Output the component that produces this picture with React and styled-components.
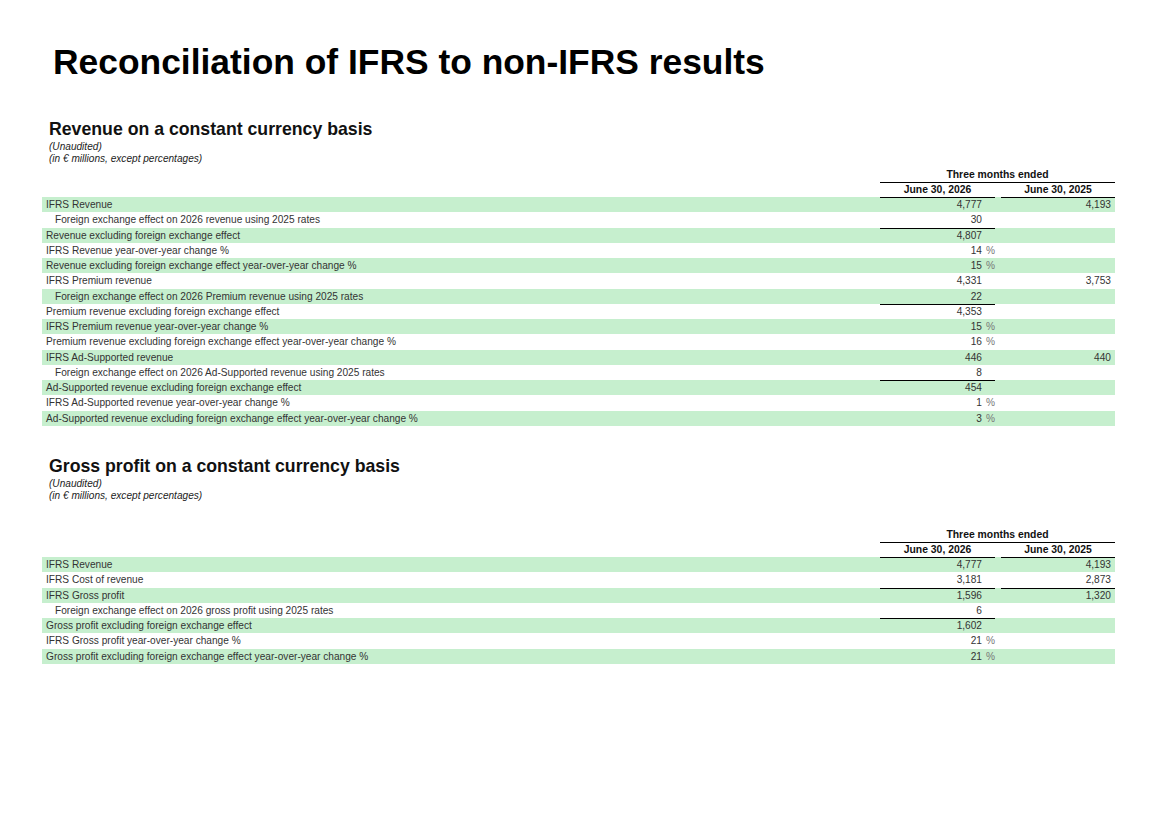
import React from 'react';
import styled, { createGlobalStyle } from 'styled-components';

const GlobalStyle = createGlobalStyle`
  body {
    margin: 0;
    background: #fff;
    font-family: "Liberation Sans", Arial, sans-serif;
  }
`;

const revenueRows = [
  { label: 'IFRS Revenue', a: '4,777', b: '4,193', green: true },
  { label: 'Foreign exchange effect on 2026 revenue using 2025 rates', a: '30', indent: true },
  { label: 'Revenue excluding foreign exchange effect', a: '4,807', green: true, ruleA: true },
  { label: 'IFRS Revenue year-over-year change %', a: '14', pct: true },
  { label: 'Revenue excluding foreign exchange effect year-over-year change %', a: '15', pct: true, green: true },
  { label: 'IFRS Premium revenue', a: '4,331', b: '3,753' },
  { label: 'Foreign exchange effect on 2026 Premium revenue using 2025 rates', a: '22', indent: true, green: true },
  { label: 'Premium revenue excluding foreign exchange effect', a: '4,353', ruleA: true },
  { label: 'IFRS Premium revenue year-over-year change %', a: '15', pct: true, green: true },
  { label: 'Premium revenue excluding foreign exchange effect year-over-year change %', a: '16', pct: true },
  { label: 'IFRS Ad-Supported revenue', a: '446', b: '440', green: true },
  { label: 'Foreign exchange effect on 2026 Ad-Supported revenue using 2025 rates', a: '8', indent: true },
  { label: 'Ad-Supported revenue excluding foreign exchange effect', a: '454', green: true, ruleA: true },
  { label: 'IFRS Ad-Supported revenue year-over-year change %', a: '1', pct: true },
  { label: 'Ad-Supported revenue excluding foreign exchange effect year-over-year change %', a: '3', pct: true, green: true },
];

const grossRows = [
  { label: 'IFRS Revenue', a: '4,777', b: '4,193', green: true },
  { label: 'IFRS Cost of revenue', a: '3,181', b: '2,873' },
  { label: 'IFRS Gross profit', a: '1,596', b: '1,320', green: true, ruleA: true, ruleB: true },
  { label: 'Foreign exchange effect on 2026 gross profit using 2025 rates', a: '6', indent: true },
  { label: 'Gross profit excluding foreign exchange effect', a: '1,602', green: true, ruleA: true },
  { label: 'IFRS Gross profit year-over-year change %', a: '21', pct: true },
  { label: 'Gross profit excluding foreign exchange effect year-over-year change %', a: '21', pct: true, green: true },
];

const Table = ({ rows, spaced }) => (
  <TableWrap $spaced={spaced}>
    <HeadRow>
      <span />
      <HeadSpan>Three months ended</HeadSpan>
    </HeadRow>
    <HeadRow>
      <span />
      <HeadCell>June 30, 2026</HeadCell>
      <span />
      <HeadCell>June 30, 2025</HeadCell>
    </HeadRow>
    {rows.map(row => (
      <Row key={row.label} $green={row.green}>
        <Label $indent={row.indent}>{row.label}</Label>
        <Value $rule={row.ruleA} $pad={0}>
          {row.a}
          <Suffix>{row.pct ? '%' : ''}</Suffix>
        </Value>
        <span />
        <Value $rule={row.ruleB} $pad={4}>
          {row.b}
        </Value>
      </Row>
    ))}
  </TableWrap>
);

const App = () => (
  <Page>
    <GlobalStyle />
    <Title>Reconciliation of IFRS to non-IFRS results</Title>

    <Section $top={36}>
      <Heading>Revenue on a constant currency basis</Heading>
      <Note>(Unaudited)</Note>
      <Note>(in € millions, except percentages)</Note>
      <Table rows={revenueRows} />
    </Section>

    <Section $top={29}>
      <Heading>Gross profit on a constant currency basis</Heading>
      <Note>(Unaudited)</Note>
      <Note>(in € millions, except percentages)</Note>
      <Table rows={grossRows} spaced />
    </Section>
  </Page>
);

const Page = styled.div`
  width: 1159px;
  min-height: 818px;
  box-sizing: border-box;
  padding: 42px 44px 0 42px;
  color: #000;
`;

const Title = styled.h1`
  margin: 0 0 0 11px;
  font-size: 35.4px;
  line-height: 40px;
  font-weight: 700;
  color: #000;
`;

const Section = styled.section`
  margin-top: ${({ $top }) => $top}px;
`;

const Heading = styled.h2`
  margin: 0 0 1px 7px;
  font-size: 17.7px;
  line-height: 22px;
  font-weight: 700;
  color: #111;
`;

const Note = styled.div`
  margin-left: 7px;
  font-size: 10.1px;
  line-height: 12px;
  font-style: italic;
  color: #222;
`;

const TableWrap = styled.div`
  margin-top: ${({ $spaced }) => ($spaced ? 25 : 2)}px;
  font-size: 10.15px;
`;

const cols = '1fr 115px 6px 114px';

const HeadRow = styled.div`
  display: grid;
  grid-template-columns: ${cols};
  height: 15px;
  box-sizing: border-box;
`;

const HeadSpan = styled.div`
  grid-column: 2 / 5;
  text-align: center;
  font-size: 10.4px;
  font-weight: 700;
  color: #111;
  line-height: 15px;
  border-bottom: 1px solid #000;
`;

const HeadCell = styled.div`
  text-align: center;
  font-size: 10.4px;
  font-weight: 700;
  color: #111;
  line-height: 15px;
  border-bottom: 1px solid #000;
`;

const Row = styled.div`
  display: grid;
  grid-template-columns: ${cols};
  height: 15.27px;
  background: ${({ $green }) => ($green ? '#c6efce' : 'transparent')};
  color: #333;
  line-height: 15px;
`;

const Label = styled.div`
  padding-left: ${({ $indent }) => ($indent ? 13 : 4)}px;
  white-space: nowrap;
`;

const Value = styled.div`
  display: flex;
  justify-content: flex-end;
  box-sizing: border-box;
  padding-right: ${({ $pad }) => $pad}px;
  border-top: 1px solid ${({ $rule }) => ($rule ? '#000' : 'transparent')};
  line-height: 13px;
`;

const Suffix = styled.span`
  width: 13px;
  text-align: right;
  color: #777;
`;

export default App;
